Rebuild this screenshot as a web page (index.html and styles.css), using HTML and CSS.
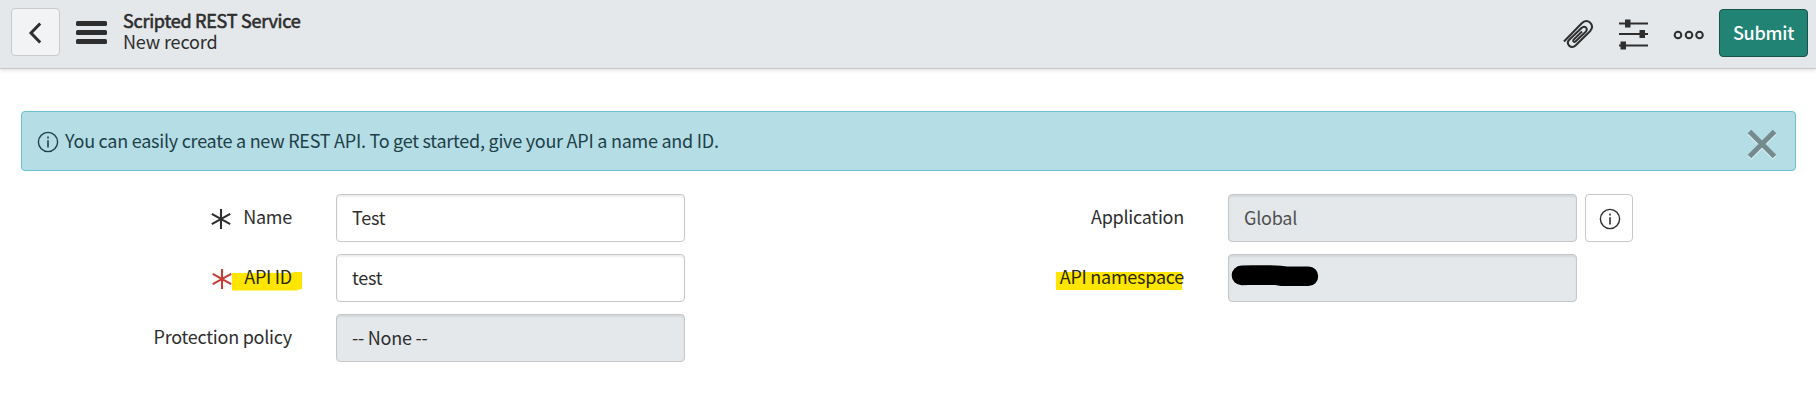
FILE: index.html
```html
<!DOCTYPE html>
<html lang="en">
<head>
<meta charset="utf-8">
<title>Scripted REST Service</title>
<link rel="stylesheet" href="styles.css">
</head>
<body>
<header class="bar">
  <button class="back" aria-label="Back"><svg width="48" height="48" viewBox="0 0 48 48"><path class="chevron" d="M29.2 15.5 20 25l9.2 9.5"/></svg></button>
  <svg class="menu" width="32" height="24" viewBox="0 0 32 24"><rect width="31" height="5" rx="1.5"/><rect y="9" width="31" height="5" rx="1.5"/><rect y="18" width="31" height="5" rx="1.5"/></svg>
  <div class="heading">
    <div class="title">Scripted REST Service</div>
    <div class="subtitle">New record</div>
  </div>
  <div class="actions">
    <svg class="clip" width="32" height="32" viewBox="0 0 32 32"><path d="M2 23.5 19.5 5.5C22 3 25 2 28 4.500C31 7.500 30.500 10.500 28 13.200L13.500 27.500C11.500 29.500 9 29.500 7.200 27.700C5.500 26 5.500 23.500 7.500 21.500L19.500 10C21 8.500 22.700 8.500 24 9.500C25.200 11 25 12.500 23.500 14L13.500 23.500C12 24.500 10.500 23.300 11.700 21.600L20 13.500"/></svg>
    <svg class="sliders" width="30" height="32" viewBox="0 0 30 32"><path d="M1 5.500H30M1 16H30M1 27.500H30"/><path class="knob" d="M7 1.500h5.500v8H7zM21.500 12h5.500v8h-5.500zM2.500 23.500H8v8H2.500z"/></svg>
    <svg class="more" width="32" height="10" viewBox="0 0 32 10"><circle cx="5" cy="5" r="3.300"/><circle cx="16" cy="5" r="3.300"/><circle cx="26.500" cy="5" r="3.300"/></svg>
    <button class="submit">Submit</button>
  </div>
</header>
<main>
  <div class="alert">
    <svg class="info" width="22" height="22" viewBox="0 0 22 22"><circle cx="11" cy="11" r="9.600"/><path d="M10.200 5.500h1.600v2h-1.600zM10.200 9.300h1.600v7.200h-1.600z"/></svg>
    <span class="message">You can easily create a new REST API. To get started, give your API a name and ID.</span>
    <svg class="close" width="30" height="31" viewBox="0 0 30 31"><path class="glow" d="M2.500 4 27.500 29M27.500 4 2.500 29"/><path d="M2.500 2.500 27.500 27.500M27.500 2.500 2.500 27.500"/></svg>
  </div>
  <form class="form">
    <div class="column">
      <div class="row">
        <div class="label"><svg class="star" width="20" height="20" viewBox="0 0 20 20"><path d="M10 0V20M.8 4.800 19.200 15.200M19.200 4.800.8 15.200"/></svg><span>Name</span></div>
        <div class="field">Test</div>
      </div>
      <div class="row">
        <div class="label"><svg class="star required" width="20" height="20" viewBox="0 0 20 20"><path d="M10 0V20M.8 4.800 19.200 15.200M19.200 4.800.8 15.200"/></svg><span class="mark"><svg class="marker" width="70" height="19" viewBox="0 0 70 19"><path d="M0 1H60L62 0H70V17L64 18.500H0z"/></svg>API ID</span></div>
        <div class="field">test</div>
      </div>
      <div class="row">
        <div class="label"><span>Protection policy</span></div>
        <div class="field locked">-- None --</div>
      </div>
    </div>
    <div class="column">
      <div class="row">
        <div class="label"><span>Application</span></div>
        <div class="field locked muted">Global</div>
        <div class="lookup"><svg class="info" width="22" height="22" viewBox="0 0 22 22"><circle cx="11" cy="11" r="9.600"/><path d="M10.200 5.500h1.600v2h-1.600zM10.200 9.300h1.600v7.200h-1.600z"/></svg></div>
      </div>
      <div class="row">
        <div class="label"><span class="mark wide"><svg class="marker" width="126" height="18" viewBox="0 0 126 18"><path d="M0 0H126V18H0z"/></svg>API namespace</span></div>
        <div class="field locked masked"><svg width="88" height="22" viewBox="0 0 88 22"><path d="M10.500 0.500C25 .2 40 0 50 .7L56 1.500H77.500A9.700 9.700 0 0 1 77.500 21H50L44 20C32 20 22 20 10.500 20.200A9.800 9.800 0 0 1 10.500 .5z"/></svg></div>
      </div>
    </div>
  </form>
</main>
</body>
</html>
```
FILE: styles.css
```css
* { box-sizing: border-box; }
body {
  margin: 0;
  background: #fff;
  color: #2e2e2e;
  font: 18px/24px "Noto Sans CJK SC", "Open Sans", sans-serif;
  letter-spacing: -.25px;
}
svg { display: block; flex: none; fill: none; stroke: none; }
button { font: inherit; letter-spacing: inherit; padding: 0; }

.bar {
  display: flex;
  height: 69px;
  padding: 8px 8px 0 11px;
  background: #e4e8eb;
  border-bottom: 1px solid #c6c8ca;
  box-shadow: 0 1px 4px rgba(0, 0, 0, .14);
}
.back {
  width: 49px;
  height: 48px;
  background: #f2f3f5;
  border: 1px solid #c8cacc;
  border-radius: 4px;
}
.back svg { margin: -1px; }
.chevron { stroke: #2e2e2e; stroke-width: 3; }
.menu { margin: 13px 0 0 16px; fill: #2e2e2e; }
.heading { margin: 2px 0 0 15px; line-height: 21px; }
.title { -webkit-text-stroke: .6px #2e2e2e; }
.subtitle { letter-spacing: -.15px; }
.actions { display: flex; margin-left: auto; }
.clip { margin: 10px 24px 0 0; stroke: #2e2e2e; stroke-width: 2; }
.sliders { margin: 10px 25px 0 0; stroke: #2e2e2e; stroke-width: 2; }
.sliders .knob { fill: #2e2e2e; stroke: none; }
.more { margin: 22px 14px 0 0; stroke: #2e2e2e; stroke-width: 2; }
.submit {
  width: 89px;
  height: 48px;
  margin-top: 1px;
  padding-bottom: 2px;
  color: #fff;
  background: #208374;
  border: 1px solid #175349;
  border-radius: 4px;
  font-weight: 500;
}

.alert {
  display: flex;
  height: 60px;
  margin: 42px 20px 0 21px;
  padding: 0 18px 0 15px;
  background: #b5dde5;
  border: 1px solid #6bbfce;
  border-radius: 4px;
  color: #204048;
}
.alert .info { margin-top: 19px; }
.info circle { stroke: currentColor; stroke-width: 1.4; }
.info path { fill: currentColor; }
.message { margin: 16px 0 0 6px; }
.close { margin: 17px 0 0 auto; stroke: #758a8f; stroke-width: 5; }
.close .glow { stroke: #d9eef2; }

.form { display: flex; padding-top: 23px; }
.column { display: flex; flex-direction: column; gap: 12px; width: 892px; }
.row { display: flex; height: 48px; }
.label {
  display: flex;
  justify-content: flex-end;
  width: 292px;
  margin-right: 44px;
  padding-top: 10px;
}
.star { margin: 5px 12px 0 0; stroke: #2e2e2e; stroke-width: 2.1; }
.required { stroke: #c83c36; }
.mark { position: relative; z-index: 0; color: #2b2700; }
.marker { position: absolute; z-index: -1; left: -12px; top: 8px; fill: #ffe600; }
.wide .marker { left: -4px; }
.field {
  width: 349px;
  height: 48px;
  padding: 10px 15px;
  border: 1px solid #c5c7c9;
  border-radius: 4px;
  box-shadow: inset 0 2px 2px rgba(0, 0, 0, .07);
}
.locked { background: #e4e8eb; }
.muted { color: #505050; }
.masked { padding: 10px 2px; }
.masked svg { fill: #000; }
.lookup {
  display: flex;
  justify-content: center;
  width: 48px;
  height: 48px;
  margin-left: 8px;
  padding: 13px 0 0 1px;
  border: 1px solid #c5c7c9;
  border-radius: 4px;
}
```
